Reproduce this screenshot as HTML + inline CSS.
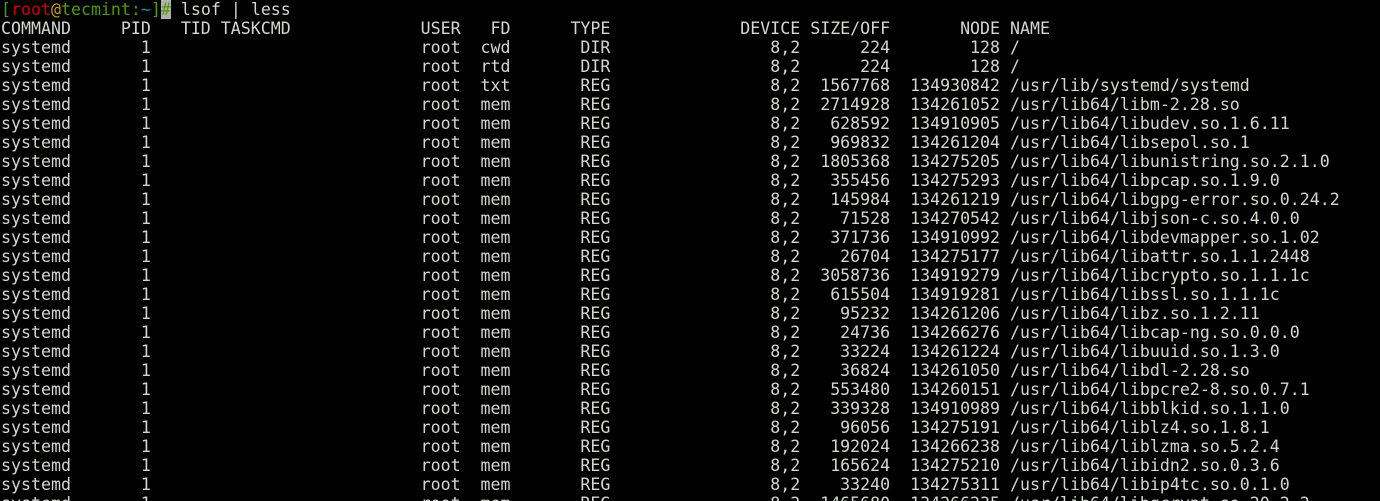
<!DOCTYPE html>
<html><head><meta charset="utf-8"><style>
html,body{margin:0;padding:0;background:#000;width:1380px;height:501px;overflow:hidden}
pre{margin:0;padding:0 0 0 1px;font-family:"DejaVu Sans Mono","Liberation Mono",monospace;font-size:16.6px;line-height:19px;color:#d3d7cf;white-space:pre}
.r{color:#cc0000}.y{color:#c4a000}.g{color:#4e9a06}.c{color:#06989a}.gb{color:#4e9a06;background:#b0b0b0}
</style></head><body><pre><span class="g">[</span><span class="r">root</span><span class="y">@</span><span class="g">tecmint</span><span class="g">:</span><span class="c">~</span><span class="g">]</span><span class="gb">#</span> lsof | less
COMMAND     PID   TID TASKCMD             USER   FD      TYPE             DEVICE SIZE/OFF       NODE NAME
systemd       1                           root  cwd       DIR                8,2      224        128 /
systemd       1                           root  rtd       DIR                8,2      224        128 /
systemd       1                           root  txt       REG                8,2  1567768  134930842 /usr/lib/systemd/systemd
systemd       1                           root  mem       REG                8,2  2714928  134261052 /usr/lib64/libm-2.28.so
systemd       1                           root  mem       REG                8,2   628592  134910905 /usr/lib64/libudev.so.1.6.11
systemd       1                           root  mem       REG                8,2   969832  134261204 /usr/lib64/libsepol.so.1
systemd       1                           root  mem       REG                8,2  1805368  134275205 /usr/lib64/libunistring.so.2.1.0
systemd       1                           root  mem       REG                8,2   355456  134275293 /usr/lib64/libpcap.so.1.9.0
systemd       1                           root  mem       REG                8,2   145984  134261219 /usr/lib64/libgpg-error.so.0.24.2
systemd       1                           root  mem       REG                8,2    71528  134270542 /usr/lib64/libjson-c.so.4.0.0
systemd       1                           root  mem       REG                8,2   371736  134910992 /usr/lib64/libdevmapper.so.1.02
systemd       1                           root  mem       REG                8,2    26704  134275177 /usr/lib64/libattr.so.1.1.2448
systemd       1                           root  mem       REG                8,2  3058736  134919279 /usr/lib64/libcrypto.so.1.1.1c
systemd       1                           root  mem       REG                8,2   615504  134919281 /usr/lib64/libssl.so.1.1.1c
systemd       1                           root  mem       REG                8,2    95232  134261206 /usr/lib64/libz.so.1.2.11
systemd       1                           root  mem       REG                8,2    24736  134266276 /usr/lib64/libcap-ng.so.0.0.0
systemd       1                           root  mem       REG                8,2    33224  134261224 /usr/lib64/libuuid.so.1.3.0
systemd       1                           root  mem       REG                8,2    36824  134261050 /usr/lib64/libdl-2.28.so
systemd       1                           root  mem       REG                8,2   553480  134260151 /usr/lib64/libpcre2-8.so.0.7.1
systemd       1                           root  mem       REG                8,2   339328  134910989 /usr/lib64/libblkid.so.1.1.0
systemd       1                           root  mem       REG                8,2    96056  134275191 /usr/lib64/liblz4.so.1.8.1
systemd       1                           root  mem       REG                8,2   192024  134266238 /usr/lib64/liblzma.so.5.2.4
systemd       1                           root  mem       REG                8,2   165624  134275210 /usr/lib64/libidn2.so.0.3.6
systemd       1                           root  mem       REG                8,2    33240  134275311 /usr/lib64/libip4tc.so.0.1.0
systemd       1                           root  mem       REG                8,2  1465680  134266235 /usr/lib64/libgcrypt.so.20.2.2
</pre></body></html>
